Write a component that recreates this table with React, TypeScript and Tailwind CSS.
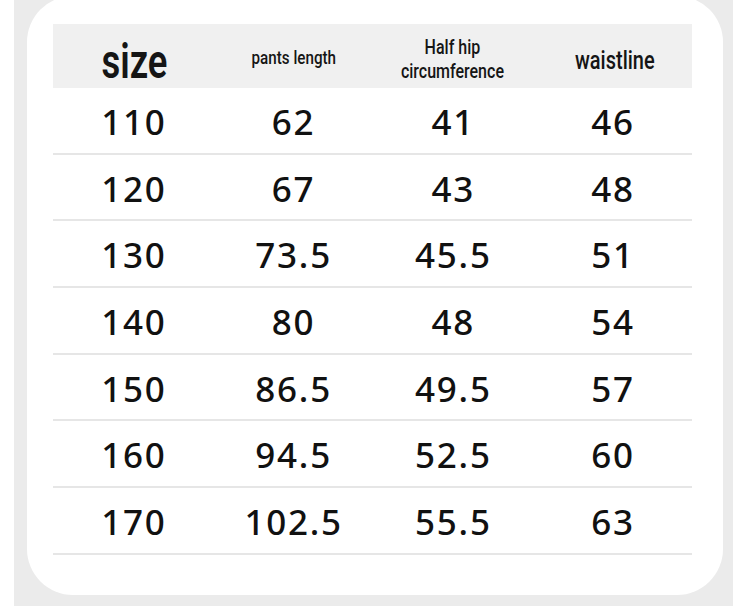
import React from "react";

const rows: [string, string, string, string][] = [
  ["110", "62", "41", "46"],
  ["120", "67", "43", "48"],
  ["130", "73.5", "45.5", "51"],
  ["140", "80", "48", "54"],
  ["150", "86.5", "49.5", "57"],
  ["160", "94.5", "52.5", "60"],
  ["170", "102.5", "55.5", "63"],
];

export default function App() {
  return (
    <div className="w-[750px] h-[610px] bg-white pl-[14px] pr-[17px] overflow-hidden">
      <div className="h-full bg-[#ebebeb] pl-[13px] pr-[10px]">
        <div className="h-[599px] -mt-[4px] bg-white rounded-[46px] pl-[26px] pr-[31px] pt-[28px]">
          <div
            className="h-[64px] bg-[#f0f0f0] grid grid-cols-4 text-[#151515]"
            style={{ fontFamily: "Roboto, 'Noto Sans', sans-serif" }}
          >
            <div className="flex items-end justify-center pb-[2px]">
              <span className="inline-block scale-x-[0.76] text-[48px] leading-none font-semibold translate-x-[2px]">
                size
              </span>
            </div>
            <div className="flex items-center justify-center pt-[2px]">
              <span className="inline-block scale-x-[0.8] text-[19px] leading-none font-medium translate-x-[1px]">
                pants length
              </span>
            </div>
            <div className="flex items-center justify-center pt-[6px]">
              <span className="inline-block scale-x-[0.8] text-[20px] leading-[24px] font-medium text-center">
                Half hip
                <br />
                circumference
              </span>
            </div>
            <div className="flex items-center justify-center pt-[8px]">
              <span className="inline-block scale-x-[0.8] text-[25px] leading-none font-medium translate-x-[3px]">
                waistline
              </span>
            </div>
          </div>
          {rows.map((r) => (
            <div
              key={r[0]}
              className="h-[66.7px] grid grid-cols-4 border-b-2 border-[#e6e6e6] text-[#111]"
              style={{ fontFamily: "'Noto Sans', 'Open Sans', sans-serif" }}
            >
              {r.map((c, i) => (
                <div
                  key={i}
                  className="flex items-center justify-center text-[35px] font-medium leading-none tracking-[0.05em] pt-[2px] pl-[2px]"
                >
                  {c}
                </div>
              ))}
            </div>
          ))}
        </div>
      </div>
    </div>
  );
}
